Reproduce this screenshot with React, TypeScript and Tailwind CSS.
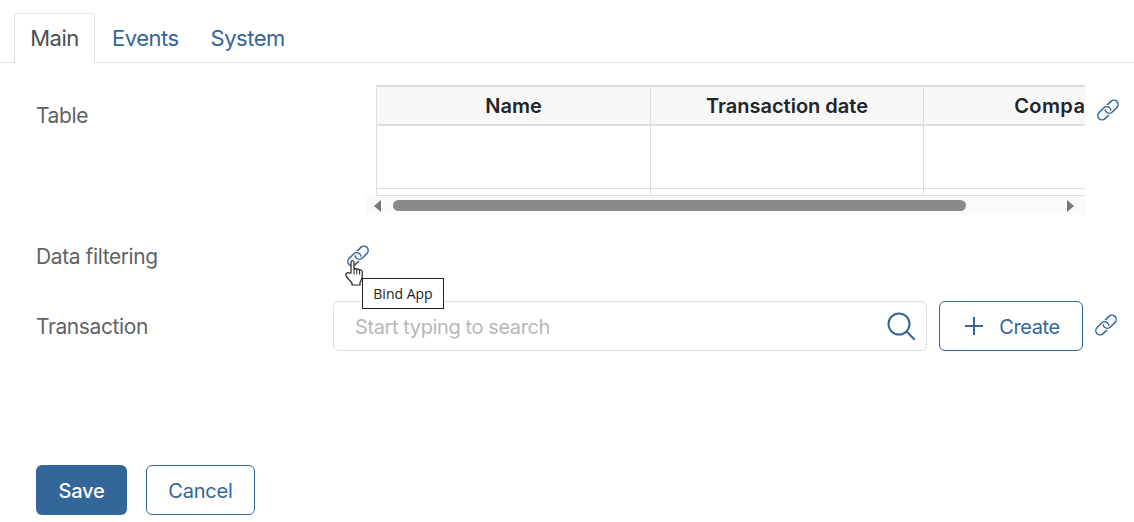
const LinkIcon = ({ className }: { className?: string }) => (
  <svg viewBox="0 0 24 24" width="24" height="24" fill="none" strokeWidth="1.5" className={className}>
    <defs>
      <clipPath id="link-half">
        <path d="M0 0H24L0 24Z" />
      </clipPath>
    </defs>
    <rect x="0.9" y="11" width="15" height="8.6" rx="4.3" stroke="#336699" transform="rotate(-45 8.4 15.3)" />
    <rect x="8.1" y="4.4" width="15" height="8.6" rx="4.3" stroke="#fff" strokeWidth="3.6" transform="rotate(-45 15.6 8.7)" />
    <rect x="8.1" y="4.4" width="15" height="8.6" rx="4.3" stroke="#336699" transform="rotate(-45 15.6 8.7)" />
    <g clipPath="url(#link-half)">
      <rect x="0.9" y="11" width="15" height="8.6" rx="4.3" stroke="#fff" strokeWidth="3.6" transform="rotate(-45 8.4 15.3)" />
      <rect x="0.9" y="11" width="15" height="8.6" rx="4.3" stroke="#336699" transform="rotate(-45 8.4 15.3)" />
    </g>
  </svg>
);

const Hand = () => (
  <svg viewBox="0 0 20 26" width="20" height="26" className="absolute left-[345px] top-[260px]">
    <path
      d="M6 13V2C6 .3 9 .3 9 2V9.5C9.3 8.3 11.6 8.3 11.8 9.8C12.3 8.7 14.4 8.9 14.6 10.4C15.2 9.5 17.2 9.8 17.2 11.4V17C17 19.5 15.8 21 15 22.5V25H7V23C5 21 2.5 18.5 1 15.5C.2 13.5 2.5 12 4 13.2Z"
      fill="#fff"
      stroke="#222"
      strokeWidth="1.2"
      strokeLinejoin="round"
    />
    <path d="M9 9.5v5M11.8 9.8v4.7M14.6 10.4v4.1" stroke="#222" strokeWidth="1" />
  </svg>
);

export default function App() {
  return (
    <div className="relative h-[522px] w-[1134px] overflow-hidden bg-white font-['Inter',sans-serif] text-[21px] tracking-[-0.4px] text-[#5f6368]">
      <div className="flex h-[63px] items-end border-b border-[#dfe3ea] pl-[14px] text-[22px] tracking-[-0.5px]">
        <div className="z-10 mb-[-1px] flex h-[50px] w-[81px] items-center justify-center rounded-t-[4px] border border-b-0 border-[#dfe3ea] bg-white text-[#4a4f55]">
          Main
        </div>
        <div className="flex h-[49px] items-center pt-[2px] pl-[17px] text-[#336699]">Events</div>
        <div className="flex h-[49px] items-center pt-[2px] pl-[32px] text-[#336699]">System</div>
      </div>

      <div className="flex h-[152px] pt-[22px] pl-[36px]">
        <div className="w-[330px] pt-[17px] leading-[28px]">Table</div>
        <div className="h-[130px] w-[719px] overflow-hidden">
          <div className="ml-[10px] h-[111px] overflow-hidden border-t-2 border-b border-l border-[#dddddd]">
            <div className="flex h-[39px] w-[900px] border-b-2 border-[#dddddd] bg-[#f7f7f7] text-[20px] font-semibold tracking-normal text-[#20242b]">
              <div className="flex w-[274px] items-center justify-center border-r border-[#dddddd]">Name</div>
              <div className="flex w-[273px] items-center justify-center border-r border-[#dddddd]">Transaction date</div>
              <div className="flex w-[273px] items-center justify-center pl-[3px] tracking-[0.4px]">Company</div>
            </div>
            <div className="flex h-[63px] w-[900px] border-b border-[#dddddd]">
              <div className="w-[274px] border-r border-[#dddddd]" />
              <div className="w-[273px] border-r border-[#dddddd]" />
            </div>
            <div className="flex h-[6px] w-[900px]">
              <div className="w-[274px] border-r border-[#dddddd]" />
              <div className="w-[273px] border-r border-[#dddddd]" />
            </div>
          </div>
          <div className="flex h-[19px] items-center bg-[#fafafa] pl-[8px]">
            <div className="h-0 w-0 border-y-[6px] border-r-[7px] border-y-transparent border-r-[#777777]" />
            <div className="ml-[12px] h-[11px] w-[573px] rounded-full bg-[#8a8a8a]" />
            <div className="ml-[101px] h-0 w-0 border-y-[6px] border-l-[7px] border-y-transparent border-l-[#777777]" />
          </div>
        </div>
        <LinkIcon className="ml-[11px] mt-[13px]" />
      </div>

      <div className="flex h-[86px] pl-[36px]">
        <div className="w-[310px] pt-[28px] leading-[28px]">Data filtering</div>
        <LinkIcon className="mt-[29px]" />
      </div>

      <div className="flex h-[50px] pl-[36px]">
        <div className="flex w-[297px] items-center pt-[2px]">Transaction</div>
        <div className="flex h-[50px] w-[594px] items-center justify-between rounded-[6px] border border-[#dddddd] pr-[10px] pl-[21px] text-[20px] text-[#b8b8b8]">
          <span className="pt-[2px]">Start typing to search</span>
          <svg viewBox="0 0 30 30" width="30" height="30" fill="none" stroke="#336699" strokeWidth="2">
            <circle cx="13" cy="13" r="10.5" />
            <path d="M20.8 20.8l7.4 7.4" strokeLinecap="round" />
          </svg>
        </div>
        <div className="ml-[12px] flex h-[50px] w-[144px] items-center justify-center gap-[15px] rounded-[6px] border border-[#336699] pl-[2px] text-[20px] text-[#336699]">
          <svg viewBox="0 0 20 20" width="20" height="20" stroke="#336699" strokeWidth="2">
            <path d="M10 1v18M1 10h18" />
          </svg>
          <span className="pt-[2px]">Create</span>
        </div>
        <LinkIcon className="ml-[11px] mt-[12px]" />
      </div>

      <div className="flex gap-[19px] pt-[114px] pl-[36px] text-[20px] tracking-[-0.2px]">
        <div className="flex h-[50px] w-[91px] items-center justify-center rounded-[6px] bg-[#336699] pt-[2px] font-medium text-white">Save</div>
        <div className="flex h-[50px] w-[109px] items-center justify-center rounded-[6px] border border-[#336699] pt-[2px] text-[#336699]">Cancel</div>
      </div>

      <Hand />
      <div className="absolute top-[278px] left-[362px] flex h-[31px] w-[82px] items-center justify-center border border-[#222] bg-white font-['Open_Sans',sans-serif] text-[14px] tracking-normal text-[#222]">
        Bind App
      </div>
    </div>
  );
}
